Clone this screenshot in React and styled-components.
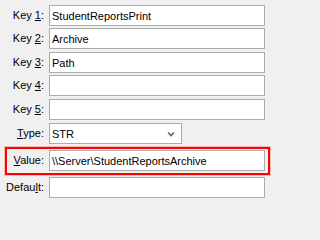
import React from "react";
import styled, { createGlobalStyle } from "styled-components";

const Global = createGlobalStyle`
  html, body { margin: 0; padding: 0; background: #f0f0f0; }
  body { font-family: "Liberation Sans", Arial, sans-serif; font-size: 11px; color: #000; }
`;

const Form = styled.div`
  width: 271px;
  height: 202px;
  padding-top: 5px;
  box-sizing: border-box;
  display: flex;
  flex-direction: column;
`;

const Row = styled.div`
  display: grid;
  grid-template-columns: 44px 216px;
  column-gap: 5px;
  align-items: center;
  height: 21px;
  margin-top: ${(p) => p.$mt || 0}px;
`;

const HighlightRow = styled.div`
  display: grid;
  grid-template-columns: 37px 216px;
  column-gap: 5px;
  align-items: center;
  margin-top: ${(p) => p.$mt || 0}px;
  margin-left: 5px;
  width: 265px;
  height: 28px;
  box-sizing: border-box;
  border: 2px solid #ff0000;
  box-shadow: 0 0 0 1px rgba(255, 90, 90, 0.35);
  padding: 1px 0 2px 0;
`;

const Label = styled.label`
  text-align: right;
  white-space: nowrap;
  color: #000;
  line-height: 13px;
`;

const Key = styled.span`
  text-decoration: underline;
  text-underline-offset: 1px;
`;

const TextBox = styled.div`
  height: 21px;
  box-sizing: border-box;
  border: 1px solid #ababab;
  background: #fff;
  display: flex;
  align-items: center;
  padding-left: 2px;
  color: #000;
  white-space: nowrap;
  overflow: hidden;
`;

const Select = styled(TextBox)`
  width: 133px;
  justify-content: space-between;
  padding-right: 6px;
`;

const Chevron = () => (
  <svg width="8" height="6" viewBox="0 0 8 6">
    <path d="M1 1.5 L4 4.5 L7 1.5" fill="none" stroke="#606060" strokeWidth="1.6" />
  </svg>
);

const keyRow = (n, value, mt) => (
  <Row $mt={mt} key={n}>
    <Label>
      Key <Key>{n}</Key>:
    </Label>
    <TextBox>{value}</TextBox>
  </Row>
);

export default function App() {
  return (
    <>
      <Global />
      <Form>
        {keyRow(1, "StudentReportsPrint", 0)}
        {keyRow(2, "Archive", 2)}
        {keyRow(3, "Path", 3)}
        {keyRow(4, "", 2)}
        {keyRow(5, "", 3)}
        <Row $mt={3}>
          <Label>
            <Key>T</Key>ype:
          </Label>
          <Select>
            <span>STR</span>
            <Chevron />
          </Select>
        </Row>
        <HighlightRow $mt={3}>
          <Label>
            <Key>V</Key>alue:
          </Label>
          <TextBox>\\Server\StudentReportsArchive</TextBox>
        </HighlightRow>
        <Row $mt={2}>
          <Label>
            Defau<Key>l</Key>t:
          </Label>
          <TextBox />
        </Row>
      </Form>
    </>
  );
}
